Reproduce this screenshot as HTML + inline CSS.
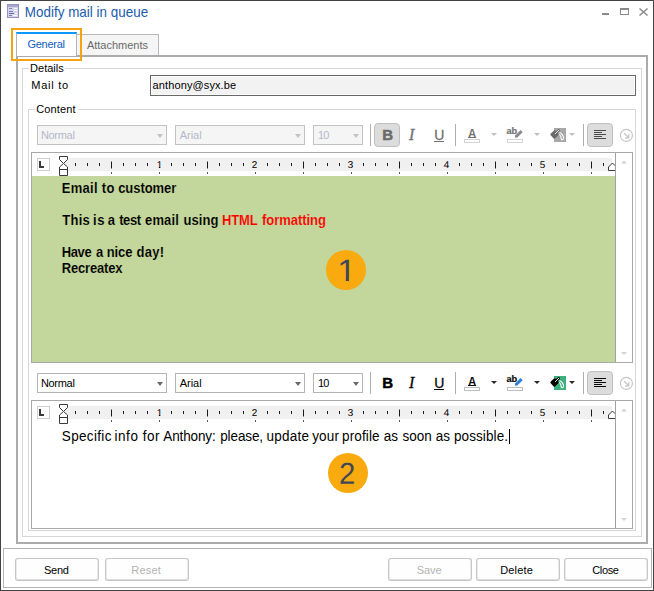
<!DOCTYPE html>
<html lang="en">
<head>
<meta charset="utf-8">
<title>Modify mail in queue</title>
<style>
*{box-sizing:border-box;margin:0;padding:0}
html,body{width:654px;height:591px;overflow:hidden;background:#fff}
body{position:relative;font-family:"Liberation Sans",sans-serif;font-size:11px;color:#000;line-height:1}
.a{position:absolute}
.t{position:absolute;white-space:pre;line-height:14px;height:14px}
#win{left:0;top:0;width:654px;height:591px;border:1px solid #444;background:#fff}
#title{left:24.8px;top:3px;font-size:13.4px;line-height:18px;height:18px;color:#1a5cad;letter-spacing:0.03px;transform:scaleY(1.1);transform-origin:0 4px}
#hl{left:11px;top:28px;width:71px;height:33px;border:2px solid #f5a30f}
#tabpanel{left:16px;top:55px;width:632px;height:489px;border:2px solid #ababab;background:#fff}
#tab1{left:16px;top:32px;width:61px;height:24px;border-left:1px solid #b4b4b4;border-right:1px solid #b4b4b4;border-top:2px solid #0c98fa;background:#fff}
#tab2{left:77px;top:34px;width:82px;height:22px;border:1px solid #b9b9b9;border-bottom:none;border-left:none;background:#f5f5f5}
.grp{border:1px solid #d6d6d6}
#g1{left:22px;top:68px;width:620px;height:469px}
#g2{left:28px;top:109px;width:608px;height:422px}
.lbl{background:#fff}
#mailto{left:150px;top:75px;width:486px;height:21px;border:1px solid #686868;background:#f2f2f2;box-shadow:inset 0 0 0 1px #fff}
.combo{height:20px;border:1px solid #b5b5b5;background:#fff}
.combo.dis{border-color:#c3c3c3;background:#f5f5f5}
.combo .t{left:2.9px;top:2px;color:#000;letter-spacing:-0.29px}
.combo.dis .t{color:#b3b8c8}
.arr{position:absolute;width:0;height:0;border-left:3.5px solid transparent;border-right:3.5px solid transparent;border-top:4px solid #6a6a6a}
.dis .arr,.arr.d{border-top-color:#c2c2c2}
.sarr{position:absolute;width:0;height:0;border-left:3px solid transparent;border-right:3px solid transparent;border-top:3.5px solid #2a2a2a}
.sarr.d{border-top-color:#c0c0c0}
.ic{line-height:20px;height:20px}
.sep{position:absolute;width:1px;height:22px;background:#b0b0b0}
.btnsel{position:absolute;width:26px;height:24px;border:1px solid #c0c0c0;border-radius:4px;background:#dcdcdc}
.ed{border:1px solid #a9a9a9;background:#fff;overflow:hidden}
.ruler{position:absolute;left:31px;top:5px;width:549px;height:13px;background:#f0f0f0}
.vs{position:absolute;left:583px;top:0;width:1px;height:100%;background:#a0a0a0}
.rt{position:absolute;white-space:pre;font-size:13.333px;line-height:16px;height:16px;font-family:"Liberation Sans",sans-serif;color:#000}
.ln{position:absolute;left:0;width:620px;height:16px;line-height:16px;white-space:pre;color:#000}
.ln span{position:absolute;top:0;white-space:pre}
.rb{font-weight:bold;font-size:13px;transform:scaleY(1.075);transform-origin:0 12px;-webkit-text-stroke:0.12px #c3d69b}
.rr{font-size:13.5px;transform:scaleY(1.08);transform-origin:0 12px}
.circ{position:absolute;width:40px;height:40px;border-radius:50%;background:#f9aa0e;color:#404857;font-size:29px;line-height:40px;text-align:center}
#bar{left:3px;top:548px;width:649px;height:40px;border:1px solid #b4b4b4;background:#fff}
.btn{position:absolute;top:558px;width:84px;height:23px;border:1px solid #c7c7c7;border-bottom-color:#c2c2c2;border-radius:3px;background:#fefefe;box-shadow:inset 0 -1px 0 #dedede,inset 1px 0 0 #ebebeb,inset -1px 0 0 #ebebeb;font-size:11px;color:#000}
.btn .t{top:4px}
.btn.dis{color:#b4b4b4}
.d1,.d2{position:absolute;left:0;top:0;width:40px;height:40px;line-height:40px;text-align:center;transform-origin:20px 20px}
.d1{font-size:30.75px;transform:rotate(0.03deg) translate(0.7px,1.06px) scaleX(1.1);clip-path:polygon(0 0,40px 0,40px 26.7px,22.1px 26.7px,22.1px 40px,19.15px 40px,19.15px 26.7px,0 26.7px)}
.d2{font-size:30.2px;transform:rotate(0.03deg) translate(-0.8px,0.85px) scaleX(0.97)}
svg{position:absolute;overflow:visible}
</style>
</head>
<body>
<div id="win" class="a"></div>

<!-- title bar -->
<svg class="a" style="left:7px;top:4px" width="12" height="14" viewBox="0 0 12 14">
  <rect x="0.5" y="0.5" width="11" height="13" fill="#d4d4f0" stroke="#9494c0"/>
  <rect x="1" y="1" width="10" height="2" fill="#a8a8cc"/>
  <rect x="2" y="4" width="3" height="1" fill="#8080a8"/><rect x="7" y="4" width="3" height="1" fill="#fff"/>
  <rect x="2" y="7" width="4" height="1" fill="#8080a8"/><rect x="7" y="6" width="3" height="1" fill="#fff"/>
  <rect x="2" y="9" width="5" height="1" fill="#707098"/><rect x="8" y="9" width="2" height="1" fill="#fff"/>
  <rect x="2" y="11" width="3" height="1" fill="#8080a8"/><rect x="6" y="11" width="4" height="1" fill="#fff"/>
</svg>
<div id="title" class="t">Modify mail in queue</div>
<svg class="a" style="left:600px;top:6px" width="50" height="12" viewBox="0 0 50 12">
  <rect x="2" y="7" width="7" height="2" fill="#8a8a8a"/>
  <rect x="20.5" y="2.5" width="8" height="6" fill="none" stroke="#8a8a8a" stroke-width="1"/>
  <rect x="20" y="2" width="9" height="2" fill="#8a8a8a"/>
  <path d="M39.5 2.5 L47.5 9.5 M47.5 2.5 L39.5 9.5" stroke="#8a8a8a" stroke-width="1.5" fill="none"/>
</svg>

<!-- tabs -->
<div id="tab2" class="a"></div>
<div id="tabpanel" class="a"></div>
<div id="tab1" class="a"></div>
<div class="t" style="left:27.4px;top:37px;color:#105cc0;letter-spacing:-0.26px">General</div>
<div class="t" style="left:86.9px;top:38px;color:#6a6a6a">Attachments</div>
<div id="hl" class="a"></div>

<!-- groups -->
<div id="g1" class="a grp"></div>
<div class="t lbl" style="left:29px;top:61px;padding:0 1.3px 0 1.1px">Details</div>
<div class="t" style="left:31.3px;top:78px;letter-spacing:0.75px">Mail to</div>
<div id="mailto" class="a"><div class="t" style="left:1.6px;top:2px;letter-spacing:0.11px">anthony@syx.be</div></div>
<div id="g2" class="a grp"></div>
<div class="t lbl" style="left:35px;top:102px;padding:0 2.3px 0 1.3px;letter-spacing:0.13px">Content</div>

<!-- toolbar 1 (disabled) -->
<div id="tb1" class="a" style="left:0;top:0px">
  <div class="a combo dis" style="left:37px;top:125px;width:130px"><div class="t">Normal</div><div class="arr" style="left:119px;top:8px"></div></div>
  <div class="a combo dis" style="left:175px;top:125px;width:130px"><div class="t" style="left:3.8px;letter-spacing:-0.04px">Arial</div><div class="arr" style="left:119px;top:8px"></div></div>
  <div class="a combo dis" style="left:313px;top:125px;width:50px"><div class="t" style="left:4.1px;letter-spacing:-1px">10</div><div class="arr" style="left:39px;top:8px"></div></div>
  <div class="sep" style="left:370px;top:124px"></div>
  <div class="btnsel" style="left:374px;top:123px"></div>
  <div class="t ic" style="left:382.3px;top:125px;font-size:15px;font-weight:bold;color:#6a6a6a;-webkit-text-stroke:0.5px #6a6a6a">B</div>
  <div class="t ic" style="left:409px;top:125px;font-size:16px;font-style:italic;color:#707070;font-family:'Liberation Serif',serif;-webkit-text-stroke:0.3px #707070">I</div>
  <div class="t ic" style="left:434.2px;top:125px;font-size:14px;color:#707070;-webkit-text-stroke:0.3px #707070">U</div>
  <div class="a" style="left:434px;top:141px;width:10px;height:1px;background:#707070"></div>
  <div class="sep" style="left:455px;top:124px"></div>
  <div class="t ic" style="left:468px;top:124px;font-size:11.5px;font-weight:bold;color:#707070;transform:scaleY(1.13);transform-origin:0 14px">A</div>
  <div class="a" style="left:467.8px;top:137px;width:8.4px;height:1px;background:#707070"></div>
  <div class="a" style="left:464px;top:139px;width:16px;height:4px;border:1px solid #d4d4d4;background:#fff"></div>
  <div class="sarr d" style="left:491px;top:133px"></div>
  <div class="t" style="left:506.6px;top:126px;font-size:9.2px;font-weight:bold;line-height:10px;height:10px;color:#707070;letter-spacing:-0.1px;-webkit-text-stroke:0.2px #707070">ab</div>
  <svg style="left:514px;top:128px" width="10" height="11" viewBox="0 0 10 11"><path d="M0.9 9.8 L1.15 7.45 L6.55 2.05 L8.65 4.15 L3.25 9.55 Z" fill="#8a8a8a"/></svg>
  <div class="a" style="left:507px;top:139px;width:16px;height:4px;border:1px solid #d4d4d4;background:#fff"></div>
  <div class="sarr d" style="left:534px;top:133px"></div>
  <svg style="left:549px;top:127px" width="18" height="16" viewBox="0 0 18 16">
    <rect x="5" y="1" width="12" height="14" fill="#a8a8a8"/>
    <rect x="2.2" y="4.2" width="6.6" height="6.6" rx="1.3" fill="#6a6a6a" transform="rotate(-42 5.5 7.5)"/>
    <path d="M6.3 6.700 L9.7 3.300" fill="none" stroke="#6a6a6a" stroke-width="2.6" stroke-linecap="round"/>
    <path d="M6.300 6.700 L9.700 3.300" fill="none" stroke="#fff" stroke-width="0.9" stroke-linecap="round"/>
    <path d="M10.4 5.600 C12.8 6.400 14.8 9 14.500 11.300 C14.300 13.200 12.100 13.200 12.100 11.300 C12.100 9.600 11.500 8.300 10.300 7.300" fill="none" stroke="#fff" stroke-width="1.1"/>
  </svg>
  <div class="sarr d" style="left:569px;top:133px"></div>
  <div class="sep" style="left:583px;top:124px"></div>
  <div class="btnsel" style="left:587px;top:123px"></div>
  <svg style="left:594px;top:130px" width="12" height="9" viewBox="0 0 12 9"><path d="M0 0.5h12M0 2.5h8M0 4.5h12M0 6.5h8M0 8.5h12" stroke="#4a4a4a" stroke-width="1" fill="none"/></svg>
  <svg style="left:619px;top:128px" width="14" height="14" viewBox="0 0 14 14"><circle cx="7.4" cy="7.4" r="6" fill="#fff" stroke="#c6c6c6" stroke-width="1.1"/><path d="M5 5 L9.8 9.8 M9.8 6 V9.8 H6" stroke="#c6c6c6" stroke-width="1.2" fill="none"/></svg>
</div>

<!-- editor 1 -->
<div class="a ed" style="left:31px;top:152px;width:602px;height:211px">
  <div class="ruler"></div>
  <div class="a" style="left:0;top:23px;width:583px;height:186px;background:#c3d69b"></div>
  <div class="vs"></div>
</div>
<svg class="a rul" style="left:32px;top:153px" width="600" height="23" viewBox="0 0 600 23">
  <rect x="5.5" y="5.5" width="12" height="12" fill="#fff" stroke="#cfcfcf"/>
  <path d="M8 8 V14 H12" fill="none" stroke="#3a3a3a" stroke-width="2"/>
  <g stroke="#1a1a1a" stroke-width="1" fill="none">
    <path d="M43.5 10v3M55.5 10v3M67.5 10v3M91.5 10v3M103.5 10v3M115.5 10v3M139.5 10v3M151.5 10v3M163.5 10v3M187.5 10v3M199.5 10v3M211.5 10v3M235.5 10v3M247.5 10v3M259.5 10v3M283.5 10v3M295.5 10v3M307.5 10v3M331.5 10v3M343.5 10v3M355.5 10v3M379.5 10v3M391.5 10v3M403.5 10v3M427.5 10v3M439.5 10v3M451.5 10v3M475.5 10v3M487.5 10v3M499.5 10v3M523.5 10v3M535.5 10v3M547.5 10v3M571.5 10v3"/>
    <path d="M79.500 8.500v7M175.500 8.500v7M271.500 8.500v7M367.500 8.500v7M463.500 8.500v7M559.500 8.500v7"/>
    <path stroke="#555" d="M79.500 19v2M127.500 19v2M175.500 19v2M223.500 19v2M271.500 19v2M319.500 19v2M367.500 19v2M415.500 19v2M463.500 19v2M511.500 19v2M559.500 19v2"/>
  </g>
  <g font-family="Liberation Sans, sans-serif" font-size="9.9" fill="#000" text-anchor="middle">
    <text x="127.500" y="15" transform="rotate(0.05 127 15)">1</text><path d="M123 14h3.800v1.200h-3.800zM128.400 14h3.300v1.200h-3.300z" fill="#f0f0f0"/><text x="222.500" y="15" transform="rotate(0.05 222 15)">2</text><text x="318.500" y="15" transform="rotate(0.05 318 15)">3</text><text x="414.500" y="15" transform="rotate(0.05 414 15)">4</text><text x="510.500" y="15" transform="rotate(0.05 510 15)">5</text>
  </g>
  <path d="M27.500 3.500 H35.500 V6.500 L31.500 10.500 L27.500 6.500 Z" fill="#fff" stroke="#3a3a3a"/>
  <path d="M27.500 22.500 V14 L31.500 10.500 L35.500 14 V22.500 Z M27.500 16.500 H35.500" fill="#fff" stroke="#3a3a3a"/>
  <path d="M576.500 17.500 V14 L580.500 10 L584.500 14 V17.500 Z" fill="#fff" stroke="#3a3a3a"/><rect x="584" y="0" width="16" height="23" fill="#fff"/><rect x="583" y="0" width="1" height="23" fill="#a0a0a0"/>
  <path d="M589 10.500 L592 7.500 L595 10.500 Z" fill="#d4d4d4"/>
</svg>
<svg class="a" style="left:621px;top:352px" width="6" height="3" viewBox="0 0 6 3"><path d="M0 0 L3 3 L6 0 Z" fill="#d4d4d4"/></svg>
<div class="ln rb" style="top:181px"><span style="left:61.7px;letter-spacing:0.31px">Email </span><span style="left:101.7px;letter-spacing:0.38px">to </span><span style="left:118.2px;letter-spacing:-0.07px">customer</span></div>
<div class="ln rb" style="top:213px"><span style="left:62.3px;letter-spacing:0.23px">This </span><span style="left:93.0px;letter-spacing:0.60px">is </span><span style="left:107.7px">a </span><span style="left:119.2px;letter-spacing:-0.40px">test </span><span style="left:145.0px;letter-spacing:0.16px">email </span><span style="left:183.6px;letter-spacing:0.02px">using </span><span style="left:222.1px;letter-spacing:-0.16px;color:#ff0000">HTML </span><span style="left:262.0px;letter-spacing:-0.04px;color:#ff0000">formatting</span></div>
<div class="ln rb" style="top:245px"><span style="left:61.7px;letter-spacing:-0.38px">Have </span><span style="left:95.9px">a </span><span style="left:106.8px;letter-spacing:-0.12px">nice </span><span style="left:136.6px;letter-spacing:0.23px">day!</span></div>
<div class="ln rb" style="top:261px"><span style="left:61.7px;letter-spacing:-0.17px">Recreatex</span></div>
<div class="circ" style="left:326px;top:250px"><span class="d1">1</span></div>

<!-- toolbar 2 (enabled) -->
<div id="tb2" class="a" style="left:0;top:248px">
  <div class="a combo" style="left:37px;top:125px;width:130px"><div class="t">Normal</div><div class="arr" style="left:119px;top:8px"></div></div>
  <div class="a combo" style="left:175px;top:125px;width:130px"><div class="t" style="left:3.8px;letter-spacing:-0.04px">Arial</div><div class="arr" style="left:119px;top:8px"></div></div>
  <div class="a combo" style="left:313px;top:125px;width:50px"><div class="t" style="left:4.1px;letter-spacing:-1px">10</div><div class="arr" style="left:39px;top:8px"></div></div>
  <div class="sep" style="left:370px;top:124px"></div>
  
  <div class="t ic" style="left:382.3px;top:125px;font-size:15px;font-weight:bold;color:#000;-webkit-text-stroke:0.5px #000">B</div>
  <div class="t ic" style="left:409px;top:125px;font-size:16px;font-style:italic;color:#0a0a0a;font-family:'Liberation Serif',serif;-webkit-text-stroke:0.3px #0a0a0a">I</div>
  <div class="t ic" style="left:434.2px;top:125px;font-size:14px;color:#0a0a0a;-webkit-text-stroke:0.3px #0a0a0a">U</div>
  <div class="a" style="left:434px;top:141px;width:10px;height:1px;background:#0a0a0a"></div>
  <div class="sep" style="left:455px;top:124px"></div>
  <div class="t ic" style="left:468px;top:124px;font-size:11.5px;font-weight:bold;color:#0a0a0a;transform:scaleY(1.13);transform-origin:0 14px">A</div>
  <div class="a" style="left:467.8px;top:137px;width:8.4px;height:1px;background:#0a0a0a"></div>
  <div class="a" style="left:464px;top:139px;width:16px;height:4px;border:1px solid #bebebe;background:#fff"></div>
  <div class="sarr" style="left:491px;top:133px"></div>
  <div class="t" style="left:506.6px;top:126px;font-size:9.2px;font-weight:bold;line-height:10px;height:10px;color:#0a0a0a;letter-spacing:-0.1px;-webkit-text-stroke:0.2px #0a0a0a">ab</div>
  <svg style="left:514px;top:128px" width="10" height="11" viewBox="0 0 10 11"><path d="M0.9 9.8 L1.15 7.45 L6.55 2.05 L8.65 4.15 L3.25 9.55 Z" fill="#2f7fd2"/></svg>
  <div class="a" style="left:507px;top:139px;width:16px;height:4px;border:1px solid #bebebe;background:#fff"></div>
  <div class="sarr" style="left:534px;top:133px"></div>
  <svg style="left:549px;top:127px" width="18" height="16" viewBox="0 0 18 16">
    <rect x="5" y="1" width="12" height="14" fill="#3eb07e"/>
    <rect x="2.2" y="4.2" width="6.6" height="6.6" rx="1.3" fill="#000" transform="rotate(-42 5.5 7.5)"/>
    <path d="M6.3 6.700 L9.7 3.300" fill="none" stroke="#000" stroke-width="2.6" stroke-linecap="round"/>
    <path d="M6.300 6.700 L9.700 3.300" fill="none" stroke="#fff" stroke-width="0.9" stroke-linecap="round"/>
    <path d="M10.4 5.600 C12.8 6.400 14.8 9 14.500 11.300 C14.300 13.200 12.100 13.200 12.100 11.300 C12.100 9.600 11.500 8.300 10.300 7.300" fill="none" stroke="#fff" stroke-width="1.1"/>
  </svg>
  <div class="sarr" style="left:569px;top:133px"></div>
  <div class="sep" style="left:583px;top:124px"></div>
  <div class="btnsel" style="left:587px;top:123px"></div>
  <svg style="left:594px;top:130px" width="12" height="9" viewBox="0 0 12 9"><path d="M0 0.5h12M0 2.5h8M0 4.5h12M0 6.5h8M0 8.5h12" stroke="#0a0a0a" stroke-width="1" fill="none"/></svg>
  <svg style="left:619px;top:128px" width="14" height="14" viewBox="0 0 14 14"><circle cx="7.4" cy="7.4" r="6" fill="#fff" stroke="#c6c6c6" stroke-width="1.1"/><path d="M5 5 L9.8 9.8 M9.8 6 V9.8 H6" stroke="#c6c6c6" stroke-width="1.2" fill="none"/></svg>
</div>

<!-- editor 2 -->
<div class="a ed" style="left:31px;top:400px;width:602px;height:129px">
  <div class="ruler"></div>
  <div class="vs"></div>
</div>
<svg class="a rul" style="left:32px;top:401px" width="600" height="23" viewBox="0 0 600 23">
  <rect x="5.500" y="5.500" width="12" height="12" fill="#fff" stroke="#cfcfcf"/>
  <path d="M8 8 V14 H12" fill="none" stroke="#3a3a3a" stroke-width="2"/>
  <g stroke="#1a1a1a" stroke-width="1" fill="none">
    <path d="M43.500 10v3M55.500 10v3M67.500 10v3M91.500 10v3M103.500 10v3M115.500 10v3M139.500 10v3M151.500 10v3M163.500 10v3M187.500 10v3M199.500 10v3M211.500 10v3M235.500 10v3M247.500 10v3M259.500 10v3M283.500 10v3M295.500 10v3M307.500 10v3M331.500 10v3M343.500 10v3M355.500 10v3M379.500 10v3M391.500 10v3M403.500 10v3M427.500 10v3M439.500 10v3M451.500 10v3M475.500 10v3M487.500 10v3M499.500 10v3M523.500 10v3M535.500 10v3M547.500 10v3M571.500 10v3"/>
    <path d="M79.500 8.500v7M175.500 8.500v7M271.500 8.500v7M367.500 8.500v7M463.500 8.500v7M559.500 8.500v7"/>
    <path stroke="#555" d="M79.500 19v2M127.500 19v2M175.500 19v2M223.500 19v2M271.500 19v2M319.500 19v2M367.500 19v2M415.500 19v2M463.500 19v2M511.500 19v2M559.500 19v2"/>
  </g>
  <g font-family="Liberation Sans, sans-serif" font-size="9.9" fill="#000" text-anchor="middle">
    <text x="127.500" y="15" transform="rotate(0.05 127 15)">1</text><path d="M123 14h3.800v1.200h-3.800zM128.400 14h3.300v1.200h-3.300z" fill="#f0f0f0"/><text x="222.500" y="15" transform="rotate(0.05 222 15)">2</text><text x="318.500" y="15" transform="rotate(0.05 318 15)">3</text><text x="414.500" y="15" transform="rotate(0.05 414 15)">4</text><text x="510.500" y="15" transform="rotate(0.05 510 15)">5</text>
  </g>
  <path d="M27.500 3.500 H35.500 V6.500 L31.500 10.500 L27.500 6.500 Z" fill="#fff" stroke="#3a3a3a"/>
  <path d="M27.500 22.500 V14 L31.500 10.500 L35.500 14 V22.500 Z M27.500 16.500 H35.500" fill="#fff" stroke="#3a3a3a"/>
  <path d="M576.500 17.500 V14 L580.500 10 L584.500 14 V17.500 Z" fill="#fff" stroke="#3a3a3a"/><rect x="584" y="0" width="16" height="23" fill="#fff"/><rect x="583" y="0" width="1" height="23" fill="#a0a0a0"/>
  <path d="M589 10.500 L592 7.500 L595 10.500 Z" fill="#d4d4d4"/>
</svg>
<svg class="a" style="left:621px;top:518px" width="6" height="3" viewBox="0 0 6 3"><path d="M0 0 L3 3 L6 0 Z" fill="#d4d4d4"/></svg>
<div class="ln rr" style="top:429px"><span style="left:61.8px;letter-spacing:0.34px">Specific </span><span style="left:114.4px;letter-spacing:0.60px">info </span><span style="left:142.7px;letter-spacing:0.51px">for </span><span style="left:163.3px;letter-spacing:-0.13px">Anthony: </span><span style="left:220.2px;letter-spacing:-0.10px">please, </span><span style="left:266.5px;letter-spacing:0.22px">update </span><span style="left:312.2px;letter-spacing:0.16px">your </span><span style="left:342.1px;letter-spacing:0.11px">profile </span><span style="left:383.7px;letter-spacing:0.07px">as </span><span style="left:402.6px">soon </span><span style="left:435.8px;letter-spacing:-0.12px">as </span><span style="left:453.9px;letter-spacing:0.11px">possible.</span></div>
<div class="a" style="left:509px;top:429px;width:1px;height:15px;background:#000"></div>
<div class="circ" style="left:328px;top:453px"><span class="d2">2</span></div>

<!-- button bar -->
<div id="bar" class="a"></div>
<div class="btn" style="left:15px"><div class="t" style="left:27.9px;letter-spacing:-0.2px">Send</div></div>
<div class="btn dis" style="left:105px"><div class="t" style="left:25.3px;letter-spacing:0.21px">Reset</div></div>
<div class="btn dis" style="left:388px"><div class="t" style="left:27.8px;letter-spacing:-0.08px">Save</div></div>
<div class="btn" style="left:476px"><div class="t" style="left:23.2px;letter-spacing:0.16px">Delete</div></div>
<div class="btn" style="left:564px"><div class="t" style="left:27.3px;letter-spacing:-0.38px">Close</div></div>
</body>
</html>
